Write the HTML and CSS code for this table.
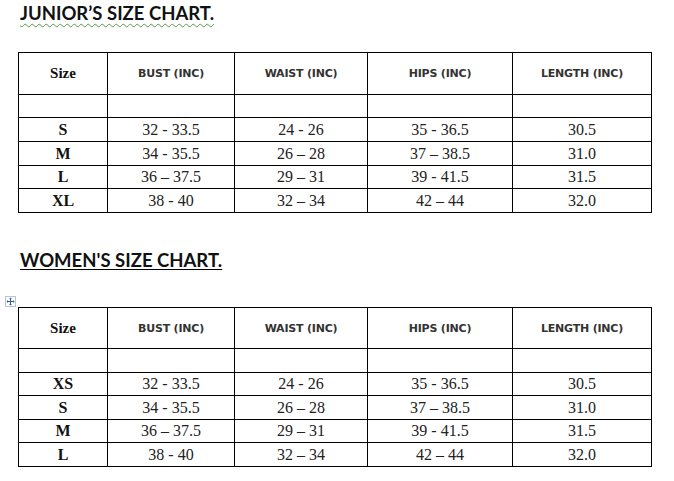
FILE: index.html
```html
<!DOCTYPE html>
<html>
<head>
<meta charset="utf-8">
<link rel="stylesheet" href="styles.css">
</head>
<body>
<div class="page">
  <h1 class="title title-junior">JUNIOR’S SIZE CHART.</h1>
  <table class="chart chart-junior">
    <colgroup><col class="c1"><col class="c2"><col class="c3"><col class="c4"><col class="c5"></colgroup>
    <tr class="head"><th class="size">Size</th><th>BUST (INC)</th><th>WAIST (INC)</th><th>HIPS (INC)</th><th>LENGTH (INC)</th></tr>
    <tr class="blank"><td></td><td></td><td></td><td></td><td></td></tr>
    <tr class="r24"><td class="sz">S</td><td>32 - 33.5</td><td>24 - 26</td><td>35 - 36.5</td><td>30.5</td></tr>
    <tr class="r24"><td class="sz">M</td><td>34 - 35.5</td><td>26 – 28</td><td>37 – 38.5</td><td>31.0</td></tr>
    <tr class="r23"><td class="sz">L</td><td>36 – 37.5</td><td>29 – 31</td><td>39 - 41.5</td><td>31.5</td></tr>
    <tr class="r24"><td class="sz">XL</td><td>38 - 40</td><td>32 – 34</td><td>42 – 44</td><td>32.0</td></tr>
  </table>

  <h1 class="title title-women">WOMEN'S SIZE CHART.</h1>
  <div class="table-wrap">
    <span class="move-handle"><svg width="11" height="11" viewBox="0 0 11 11"><rect x="0.5" y="0.5" width="10" height="10" fill="#fff" stroke="#b9c3d3"/><path d="M5.5 2v7M2 5.5h7" stroke="#2f5f9f" stroke-width="1"/><path d="M5.5 1.5l-1.5 1.5h3zM5.5 9.5l-1.5-1.5h3zM1.5 5.5l1.5-1.5v3zM9.5 5.5l-1.5-1.5v3z" fill="#2f5f9f"/></svg></span>
    <table class="chart chart-women">
      <colgroup><col class="c1"><col class="c2"><col class="c3"><col class="c4"><col class="c5"></colgroup>
      <tr class="head h41"><th class="size">Size</th><th>BUST (INC)</th><th>WAIST (INC)</th><th>HIPS (INC)</th><th>LENGTH (INC)</th></tr>
      <tr class="blank b24"><td></td><td></td><td></td><td></td><td></td></tr>
      <tr class="r23"><td class="sz">XS</td><td>32 - 33.5</td><td>24 - 26</td><td>35 - 36.5</td><td>30.5</td></tr>
      <tr class="r24"><td class="sz">S</td><td>34 - 35.5</td><td>26 – 28</td><td>37 – 38.5</td><td>31.0</td></tr>
      <tr class="r23"><td class="sz">M</td><td>36 – 37.5</td><td>29 – 31</td><td>39 - 41.5</td><td>31.5</td></tr>
      <tr class="r24"><td class="sz">L</td><td>38 - 40</td><td>32 – 34</td><td>42 – 44</td><td>32.0</td></tr>
    </table>
    <span class="resize-handle"></span>
  </div>
</div>
</body>
</html>
```
FILE: styles.css
```css
html, body {
  margin: 0;
  padding: 0;
  background: #fff;
}
.page {
  padding: 0 0 0 18px;
  width: 656px;
}
.title {
  margin: 0;
  padding-left: 2px;
  font-family: Lato, "Open Sans", sans-serif;
  font-weight: 700;
  font-size: 18.5px;
  line-height: 22px;
  color: #111;
}
.title-junior {
  padding-top: 2px;
  height: 50px;
  text-decoration: underline wavy #5a9a4a;
  text-decoration-thickness: 1px;
  text-underline-offset: 3px;
}
.title-women {
  margin-top: 36px;
  height: 22px;
  text-decoration: underline #000;
  text-decoration-thickness: 1px;
  text-underline-offset: 2px;
}
.chart {
  border-collapse: collapse;
  table-layout: fixed;
  width: 633px;
}
.c1 { width: 89px; }
.c2 { width: 127px; }
.c3 { width: 133px; }
.c4 { width: 145px; }
.c5 { width: 139px; }
.chart th, .chart td {
  border: 1px solid #000;
  padding: 0;
  text-align: center;
  vertical-align: middle;
}
.chart th {
  font-family: "DejaVu Sans", Verdana, sans-serif;
  font-size: 11px;
  font-weight: 700;
  color: #333;
  letter-spacing: -0.2px;
}
.chart th.size {
  font-family: "Liberation Serif", serif;
  font-size: 15px;
  color: #111;
  letter-spacing: 0;
}
.chart td {
  font-family: "Liberation Serif", serif;
  font-size: 16px;
  color: #222;
  line-height: 18px;
}
.chart td.sz {
  font-weight: 700;
  color: #111;
}
.head { height: 42px; }
.head.h41 { height: 41px; }
.blank { height: 23px; }
.blank.b24 { height: 24px; }
.r24 { height: 24px; }
.r23 { height: 23px; }
.table-wrap {
  position: relative;
  margin-top: 36px;
}
.move-handle {
  position: absolute;
  left: -13px;
  top: -11px;
  width: 11px;
  height: 11px;
  line-height: 0;
}
.resize-handle {
  position: absolute;
  left: 633px;
  top: 161px;
  width: 4px;
  height: 4px;
  border: 1px solid #555;
  background: #fff;
  z-index: 2;
}
```
